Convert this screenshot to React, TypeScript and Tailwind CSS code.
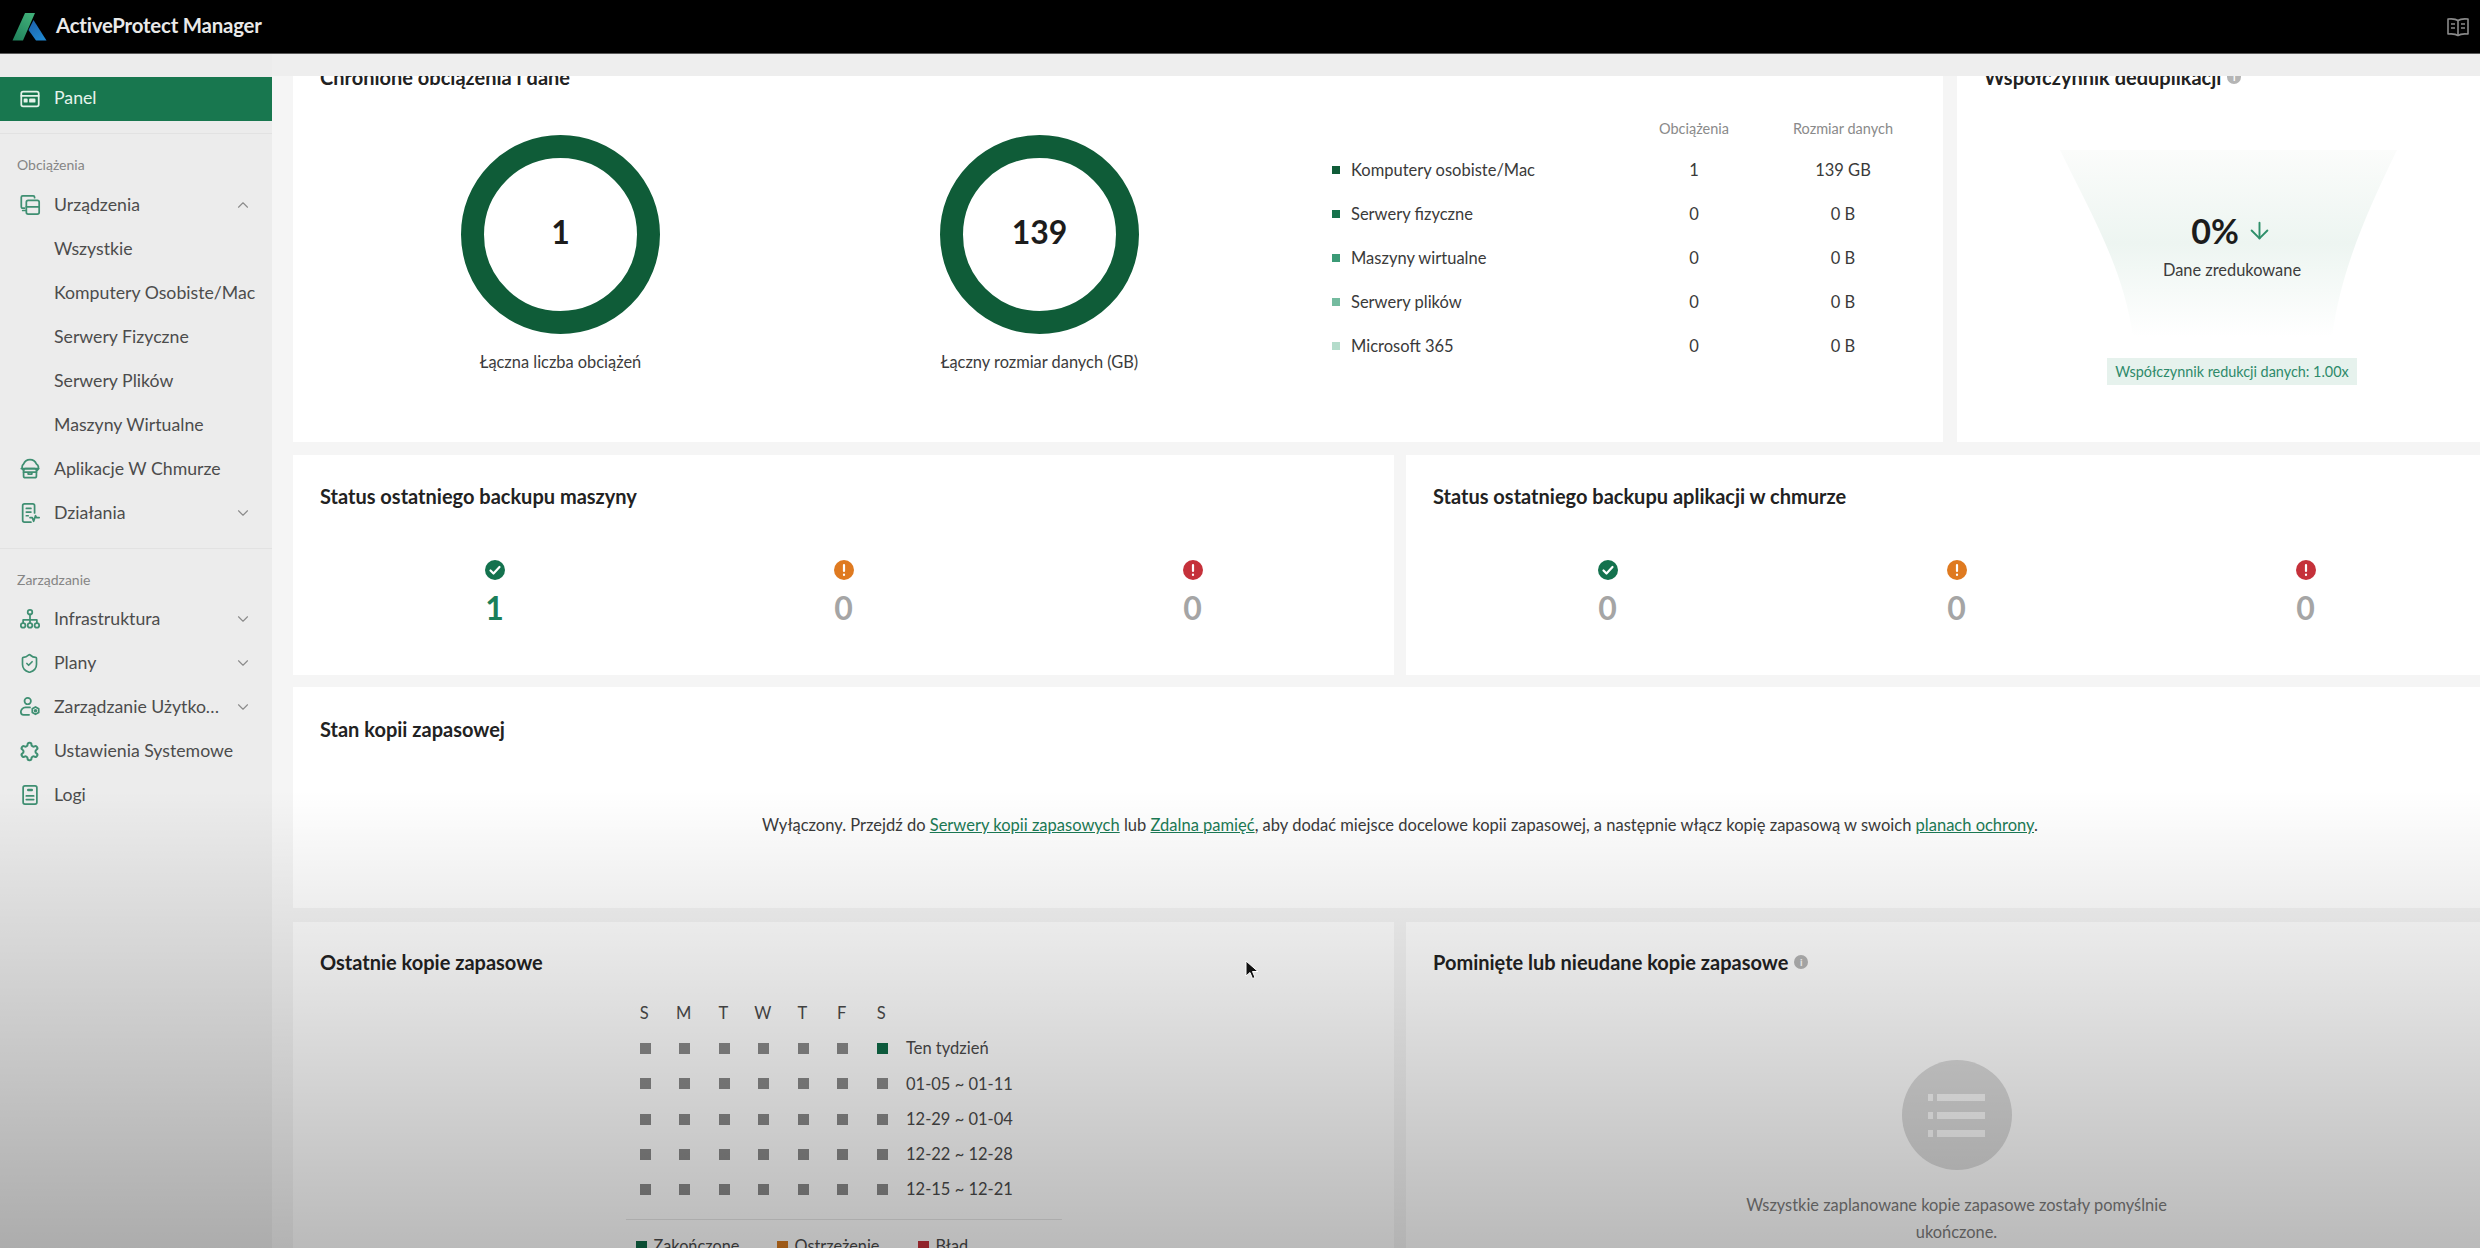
import React from "react";
import { ChevronDown, ChevronUp, ArrowDown, ShieldCheck } from "lucide-react";

const iconStroke = "#3f8f72";

const Svg = ({ children, stroke = iconStroke, size = 22, weight = 1.9 }: { children: React.ReactNode; stroke?: string; size?: number; weight?: number }) => (
  <svg width={size} height={size} viewBox="0 0 24 24" fill="none" stroke={stroke} strokeWidth={weight} strokeLinecap="round" strokeLinejoin="round">
    {children}
  </svg>
);

const PanelIcon = () => (
  <Svg stroke="#e4f3ea">
    <rect x="2.5" y="4" width="19" height="16" rx="2" />
    <path d="M2.5 8.5h19" />
    <rect x="6" y="12.5" width="2.5" height="2.5" fill="#e4f3ea" />
    <rect x="12" y="12.5" width="5" height="2.5" fill="#e4f3ea" />
  </Svg>
);
const DevicesIcon = () => (
  <Svg>
    <path d="M17 4V3.5A1.5 1.5 0 0 0 15.5 2H4A1.5 1.5 0 0 0 2.5 3.5V14A1.5 1.5 0 0 0 4 15.5h2" />
    <rect x="8" y="7" width="14" height="15" rx="2" />
    <path d="M8 14h14M4 18h3" />
  </Svg>
);
const CloudIcon = () => (
  <Svg>
    <path d="M5 13.5a4.5 4.5 0 0 1 0-7A7.5 7.5 0 0 1 19 6.5a4.5 4.5 0 0 1 1 7" />
    <path d="M2.5 11.5h19" />
    <rect x="5" y="11.5" width="14" height="10" rx="2" />
    <path d="M5 15.5h14M10 15.5v2h4v-2" />
  </Svg>
);
const ActivityIcon = () => (
  <Svg>
    <path d="M13 22H6a2 2 0 0 1-2-2V4a2 2 0 0 1 2-2h9a2 2 0 0 1 2 2v8" />
    <path d="M8 7h5M8 11h5M8 15h2" />
    <path d="M12 17h2.5l1.5 4 2-6 1 2h3" />
  </Svg>
);
const InfraIcon = () => (
  <Svg>
    <circle cx="12" cy="4.5" r="2.5" />
    <path d="M12 7v6M4.5 16.5V13h15v3.5M12 13v3.5" />
    <circle cx="4.5" cy="19" r="2.5" />
    <circle cx="12" cy="19" r="2.5" />
    <circle cx="19.5" cy="19" r="2.5" />
  </Svg>
);
const UserGearIcon = () => (
  <Svg>
    <circle cx="9.5" cy="5.5" r="3.5" />
    <path d="M12 12.5H7a5 5 0 0 0-5 5 3 3 0 0 0 3 3h6" />
    <path d="M18 12l3.5 2v4L18 20l-3.5-2v-4z" />
    <circle cx="18" cy="16" r="1" fill={iconStroke} />
  </Svg>
);
const GearIcon = () => (
  <Svg size={21} weight={2.3}>
    <path d="M12.22 2h-.44a2 2 0 0 0-2 2v.18a2 2 0 0 1-1 1.73l-.43.25a2 2 0 0 1-2 0l-.15-.08a2 2 0 0 0-2.73.73l-.22.38a2 2 0 0 0 .73 2.73l.15.1a2 2 0 0 1 1 1.72v.51a2 2 0 0 1-1 1.74l-.15.09a2 2 0 0 0-.73 2.73l.22.38a2 2 0 0 0 2.73.73l.15-.08a2 2 0 0 1 2 0l.43.25a2 2 0 0 1 1 1.73V20a2 2 0 0 0 2 2h.44a2 2 0 0 0 2-2v-.18a2 2 0 0 1 1-1.73l.43-.25a2 2 0 0 1 2 0l.15.08a2 2 0 0 0 2.73-.73l.22-.39a2 2 0 0 0-.73-2.73l-.15-.08a2 2 0 0 1-1-1.74v-.5a2 2 0 0 1 1-1.74l.15-.09a2 2 0 0 0 .73-2.73l-.22-.38a2 2 0 0 0-2.73-.73l-.15.08a2 2 0 0 1-2 0l-.43-.25a2 2 0 0 1-1-1.73V4a2 2 0 0 0-2-2z" />
  </Svg>
);
const LogIcon = () => (
  <Svg>
    <rect x="4.5" y="2" width="15" height="20" rx="2" />
    <path d="M10 6.5h4" strokeWidth="2.6" />
    <path d="M8 13h8M8 17h8" />
  </Svg>
);

const Logo = () => (
  <svg width="36" height="30" viewBox="0 0 36 30" className="ml-[12px]">
    <defs>
      <linearGradient id="logoG" x1="0" y1="1" x2="0.7" y2="0">
        <stop offset="0" stopColor="#1f7f5a" />
        <stop offset="1" stopColor="#3fae78" />
      </linearGradient>
      <linearGradient id="logoB" x1="0" y1="0" x2="0.6" y2="1">
        <stop offset="0" stopColor="#1d5fa8" />
        <stop offset="1" stopColor="#1f86d0" />
      </linearGradient>
    </defs>
    <path d="M0.5 28.5 L13 1 H23 L11 28.5 Z" fill="url(#logoG)" />
    <path d="M21.5 8 L34.5 28.5 H24 L16.5 18 Z" fill="url(#logoB)" />
  </svg>
);

const BookIcon = () => (
  <svg width="24" height="22" viewBox="0 0 24 22" fill="none" stroke="#8a8a8a" strokeWidth="1.6" strokeLinejoin="round">
    <path d="M12 4.5C10 3 7 2.5 2 3v15c5-.5 8 0 10 1.5 2-1.5 5-2 10-1.5V3c-5-.5-8 0-10 1.5z" />
    <path d="M12 4.5v15M5 8h4M5 12h4M15 8h4M15 12h4" />
  </svg>
);

const Row = ({
  icon,
  label,
  chevron,
}: {
  icon?: React.ReactNode;
  label: string;
  chevron?: "up" | "down";
}) => (
  <div className="h-[44px] flex items-center text-[17.7px] text-[#4c4c4c]">
    <div className="w-[54px] pl-[19px] flex items-center shrink-0">{icon}</div>
    {chevron ? (
      <span className="w-[168px] truncate whitespace-nowrap">{label}</span>
    ) : (
      <span className="whitespace-nowrap">{label}</span>
    )}
    {chevron === "up" && <ChevronUp size={18} strokeWidth={1.5} color="#8c8c8c" className="ml-[12px] shrink-0" />}
    {chevron === "down" && <ChevronDown size={18} strokeWidth={1.5} color="#8c8c8c" className="ml-[12px] shrink-0" />}
  </div>
);

const SectionLabel = ({ children }: { children: React.ReactNode }) => (
  <div className="mt-[21px] pl-[17px] h-[20px] leading-[20px] text-[14px] text-[#858585]">{children}</div>
);

const Sidebar = () => (
  <aside className="w-[272px] shrink-0 bg-[#ececec] pt-[23px]">
    <div className="h-[44px] bg-[#18774f] flex items-center text-[17.7px] text-[#e6f3ec]">
      <div className="w-[54px] pl-[19px] flex items-center shrink-0">
        <PanelIcon />
      </div>
      <span className="pb-[2px]">Panel</span>
    </div>
    <div className="mt-[12px] h-px bg-[#e2e2e2]" />
    <SectionLabel>Obciążenia</SectionLabel>
    <div className="mt-[8px]">
      <Row icon={<DevicesIcon />} label="Urządzenia" chevron="up" />
      <Row label="Wszystkie" />
      <Row label="Komputery Osobiste/Mac" />
      <Row label="Serwery Fizyczne" />
      <Row label="Serwery Plików" />
      <Row label="Maszyny Wirtualne" />
      <Row icon={<CloudIcon />} label="Aplikacje W Chmurze" />
      <Row icon={<ActivityIcon />} label="Działania" chevron="down" />
    </div>
    <div className="mt-[13px] h-px bg-[#e2e2e2]" />
    <SectionLabel>Zarządzanie</SectionLabel>
    <div className="mt-[7px]">
      <Row icon={<InfraIcon />} label="Infrastruktura" chevron="down" />
      <Row icon={<ShieldCheck size={21} strokeWidth={1.9} color={iconStroke} />} label="Plany" chevron="down" />
      <Row icon={<UserGearIcon />} label="Zarządzanie Użytkownikami" chevron="down" />
      <Row icon={<GearIcon />} label="Ustawienia Systemowe" />
      <Row icon={<LogIcon />} label="Logi" />
    </div>
  </aside>
);

const Title = ({ children, info }: { children: React.ReactNode; info?: boolean }) => (
  <div className="h-[28px] flex items-center gap-[6px] text-[20px] leading-[28px] font-bold text-[#222222] whitespace-nowrap">
    {children}
    {info && (
      <span className="w-[14px] h-[14px] rounded-full bg-[#b5b5b5] text-white text-[10px] leading-[14px] text-center font-bold">i</span>
    )}
  </div>
);

const Donut = ({ value, label }: { value: string; label: string }) => (
  <div className="w-[479px] pl-[2px] flex flex-col items-center">
    <div className="w-[199px] h-[199px] rounded-full border-[23px] border-[#0f5c38] bg-white flex items-center justify-center pb-[5px] text-[32px] font-bold text-[#1c1c1c]">
      {value}
    </div>
    <div className="mt-[16px] h-[24px] leading-[24px] text-[16.4px] text-[#3c3c3c]">{label}</div>
  </div>
);

const tableRows = [
  { name: "Komputery osobiste/Mac", n: "1", size: "139 GB", color: "bg-[#0f5c38]" },
  { name: "Serwery fizyczne", n: "0", size: "0 B", color: "bg-[#16724c]" },
  { name: "Maszyny wirtualne", n: "0", size: "0 B", color: "bg-[#3b9a76]" },
  { name: "Serwery plików", n: "0", size: "0 B", color: "bg-[#74bb9f]" },
  { name: "Microsoft 365", n: "0", size: "0 B", color: "bg-[#b4dccb]" },
];

const Table = () => (
  <div className="ml-[54px] mt-[19px] w-[600px] shrink-0">
    <div className="grid grid-cols-[302px_120px_178px] h-[38px] items-center text-[14.5px] text-[#8a8a8a] text-center">
      <span />
      <span>Obciążenia</span>
      <span>Rozmiar danych</span>
    </div>
    {tableRows.map((r) => (
      <div key={r.name} className="grid grid-cols-[302px_120px_178px] h-[44px] items-center text-[16.5px] text-[#3a3a3a]">
        <div className="flex items-center gap-[11px]">
          <span className={`w-[8px] h-[8px] ${r.color}`} />
          {r.name}
        </div>
        <span className="text-center">{r.n}</span>
        <span className="text-center">{r.size}</span>
      </div>
    ))}
  </div>
);

const Funnel = () => (
  <svg width="550" height="320" viewBox="0 0 550 320" className="absolute left-0 top-[100px]">
    <defs>
      <linearGradient id="funnelFill" x1="0" y1="0" x2="0" y2="1">
        <stop offset="0" stopColor="#fbfcfb" />
        <stop offset="0.5" stopColor="#edf5f1" />
        <stop offset="1" stopColor="#ffffff" />
      </linearGradient>
    </defs>
    <path d="M103 12 L440 12 C 412 70 384 130 375 199 L176 199 C 167 130 131 70 103 12 Z" fill="url(#funnelFill)" />
  </svg>
);

const StatusIcon = ({ kind }: { kind: "ok" | "warn" | "err" }) => {
  const fill = kind === "ok" ? "#14724e" : kind === "warn" ? "#df7a20" : "#c5313a";
  return (
    <svg width="20" height="20" viewBox="0 0 20 20">
      <circle cx="10" cy="10" r="10" fill={fill} />
      {kind === "ok" ? (
        <path d="M5.5 10.5l3 3 6-6.5" fill="none" stroke="#ffffff" strokeWidth="2.2" strokeLinecap="round" strokeLinejoin="round" />
      ) : (
        <path d="M10 5v6M10 14.5v.4" fill="none" stroke="#ffffff" strokeWidth="2.2" strokeLinecap="round" />
      )}
    </svg>
  );
};

const StatusCard = ({ title, first, firstColor }: { title: string; first: string; firstColor: string }) => (
  <div className="w-[1101px] h-[220px] bg-white px-[27px] pt-[27px]">
    <Title>{title}</Title>
    <div className="mt-[50px] grid grid-cols-3">
      {[
        { kind: "ok" as const, v: first, c: firstColor },
        { kind: "warn" as const, v: "0", c: "text-[#a5a5a5]" },
        { kind: "err" as const, v: "0", c: "text-[#a5a5a5]" },
      ].map((s) => (
        <div key={s.kind} className="flex flex-col items-center">
          <StatusIcon kind={s.kind} />
          <div className={`mt-[9px] h-[38px] leading-[38px] text-[32px] font-bold ${s.c}`}>{s.v}</div>
        </div>
      ))}
    </div>
  </div>
);

const Calendar = () => {
  const days = ["S", "M", "T", "W", "T", "F", "S"];
  const weeks = ["Ten tydzień", "01-05 ~ 01-11", "12-29 ~ 01-04", "12-22 ~ 12-28", "12-15 ~ 12-21"];
  return (
    <div className="mt-[19px] mx-auto w-[436px]">
      <div className="grid grid-cols-[repeat(7,39.5px)_1fr] auto-rows-[35.2px] items-center text-[16.5px] text-[#4a4a4a]">
        {days.map((d, i) => (
          <span key={i} className="text-center pr-[2px]">{d}</span>
        ))}
        <span />
        {weeks.map((w, wi) => (
          <React.Fragment key={w}>
            {days.map((_, i) => (
              <span
                key={i}
                className={`mx-auto w-[11px] h-[11px] ${wi === 0 && i === 6 ? "bg-[#0f6a47]" : "bg-[#8a8a8a]"}`}
              />
            ))}
            <span className="pl-[4px] whitespace-nowrap">{w}</span>
          </React.Fragment>
        ))}
      </div>
      <div className="mt-[12px] h-px bg-[#e6e6e6]" />
      <div className="mt-[14px] pl-[10px] flex items-center text-[16.3px] text-[#4a4a4a]">
        <span className="w-[11px] h-[11px] bg-[#0f6a47]" />
        <span className="ml-[7px] w-[123px]">Zakończone</span>
        <span className="w-[11px] h-[11px] bg-[#d67a20]" />
        <span className="ml-[7px] w-[123px]">Ostrzeżenie</span>
        <span className="w-[11px] h-[11px] bg-[#c5313a]" />
        <span className="ml-[7px]">Błąd</span>
      </div>
    </div>
  );
};

const EmptyState = () => (
  <div className="mt-[83px] flex flex-col items-center">
    <div className="w-[110px] h-[110px] rounded-full bg-[#dcdcdc] flex flex-col items-center justify-center gap-[11px]">
      {[0, 1, 2].map((i) => (
        <div key={i} className="flex gap-[4px]">
          <span className="w-[5px] h-[7px] bg-[#fafafa]" />
          <span className="w-[48px] h-[7px] bg-[#fafafa]" />
        </div>
      ))}
    </div>
    <p className="mt-[21px] w-[470px] text-center text-[16.4px] leading-[27px] text-[#7c7c7c]">
      Wszystkie zaplanowane kopie zapasowe zostały pomyślnie ukończone.
    </p>
  </div>
);

const Link = ({ children }: { children: React.ReactNode }) => (
  <span className="text-[#1b7a55] underline">{children}</span>
);

export default function App() {
  return (
    <div className="relative w-[2480px] h-[1248px] overflow-hidden bg-[#f5f5f5] font-['Lato',sans-serif]">
      <header className="h-[54px] bg-black border-b border-[#5a5a5a] flex items-center">
        <Logo />
        <span className="ml-[8px] pb-[2px] text-[20.4px] font-bold text-[#e9e9e9] tracking-[-0.2px]">ActiveProtect Manager</span>
        <div className="ml-auto mr-[10px] flex items-center">
          <BookIcon />
        </div>
      </header>
      <div className="flex h-[1194px]">
        <Sidebar />
        <main className="flex-1 min-w-0 flex flex-col">
          <div className="h-[22px] shrink-0 bg-[#eeeeee]" />
          <div className="flex-1 overflow-hidden">
            <div className="w-[2214px] ml-[21px] -mt-[38px] flex flex-col">
              <div className="flex gap-[14px]">
                <section className="w-[1650px] shrink-0 h-[404px] bg-white px-[27px] pt-[25px]">
                  <Title>Chronione obciążenia i dane</Title>
                  <div className="flex">
                    <div className="flex mt-[44px] shrink-0">
                      <Donut value="1" label="Łączna liczba obciążeń" />
                      <Donut value="139" label="Łączny rozmiar danych (GB)" />
                    </div>
                    <Table />
                  </div>
                </section>
                <section className="relative w-[550px] shrink-0 h-[404px] bg-white px-[27px] pt-[25px]">
                  <Funnel />
                  <div className="relative flex flex-col items-center">
                    <div className="self-start">
                      <Title info>Współczynnik deduplikacji</Title>
                    </div>
                    <div className="mt-[119px] h-[40px] flex items-center gap-[7px] text-[34px] font-bold text-[#1c1c1c]">
                      0%
                      <ArrowDown size={27} strokeWidth={1.7} color="#2e8f6a" />
                    </div>
                    <div className="mt-[8px] h-[24px] leading-[24px] text-[16.4px] text-[#3c3c3c]">Dane zredukowane</div>
                    <div className="mt-[76px] h-[27px] w-[250px] bg-[#e6f2ed] flex items-center justify-center text-[14.4px] text-[#2e8a6a] whitespace-nowrap">
                      Współczynnik redukcji danych: 1.00x
                    </div>
                  </div>
                </section>
              </div>
              <div className="mt-[13px] flex gap-[12px]">
                <StatusCard title="Status ostatniego backupu maszyny" first="1" firstColor="text-[#1a7f5a]" />
                <StatusCard title="Status ostatniego backupu aplikacji w chmurze" first="0" firstColor="text-[#a5a5a5]" />
              </div>
              <section className="mt-[12px] h-[221px] bg-white px-[27px] pt-[28px]">
                <Title>Stan kopii zapasowej</Title>
                <p className="mt-[70px] h-[24px] leading-[24px] text-center text-[16.5px] text-[#3a3a3a]">
                  Wyłączony. Przejdź do <Link>Serwery kopii zapasowych</Link> lub <Link>Zdalna pamięć</Link>, aby dodać miejsce docelowe kopii zapasowej, a następnie włącz kopię zapasową w swoich <Link>planach ochrony</Link>.
                </p>
              </section>
              <div className="mt-[14px] flex gap-[12px]">
                <section className="w-[1101px] h-[400px] bg-white px-[27px] pt-[26px]">
                  <Title>Ostatnie kopie zapasowe</Title>
                  <div className="pt-[1px]">
                    <Calendar />
                  </div>
                </section>
                <section className="w-[1101px] h-[400px] bg-white px-[27px] pt-[26px]">
                  <Title info>Pominięte lub nieudane kopie zapasowe</Title>
                  <div className="pt-[1px]">
                    <EmptyState />
                  </div>
                </section>
              </div>
            </div>
          </div>
        </main>
      </div>
      <div className="absolute left-0 right-0 bottom-0 h-[458px] pointer-events-none bg-gradient-to-b from-black/0 to-black/[0.27]" />
      <svg width="16" height="22" viewBox="0 0 16 22" className="absolute left-[1244px] top-[960px]">
        <path d="M2 1v15l4-3.5 2.5 6 2.5-1-2.5-6H14z" fill="#111111" stroke="#ffffff" strokeWidth="1" />
      </svg>
    </div>
  );
}
